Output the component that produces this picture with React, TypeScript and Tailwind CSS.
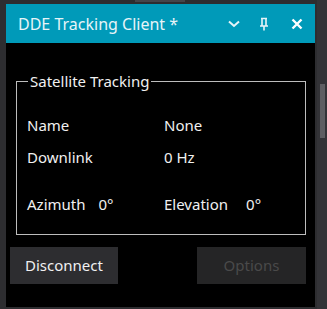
export default function App() {
  return (
    <div
      className="w-[327px] h-[309px] bg-[#2d2d30] flex overflow-hidden relative"
      style={{ fontFamily: '"Noto Sans", "Open Sans", sans-serif' }}
    >
      <div className="absolute left-[135px] top-0 w-[50px] h-[2px] bg-[#45454a]" />
      <div className="ml-[6px] mt-[4px] w-[309px] h-[303px] bg-black flex flex-col">
        <div className="h-[39px] bg-[#009ab9] flex items-center pl-[12px] pr-[12px] text-[#e6f4f8]">
          <span className="text-[16px] flex-1">DDE Tracking Client *</span>
          <svg width="12" height="8" viewBox="0 0 12 8" className="mr-[19px]">
            <path d="M1 1.5 L6 6 L11 1.5" stroke="#e6f4f8" strokeWidth="2" fill="none" />
          </svg>
          <svg width="10" height="14" viewBox="0 0 10 14" className="mr-[22px]">
            <path d="M1 9 H9 M3 1.5 V9 M7 1.5 V9 M2 1.5 H8 M5 9 V13.5" stroke="#e6f4f8" strokeWidth="1.6" fill="none" />
          </svg>
          <svg width="12" height="12" viewBox="0 0 12 12">
            <path d="M1.5 1.5 L10.5 10.5 M10.5 1.5 L1.5 10.5" stroke="#ffffff" strokeWidth="2.4" fill="none" />
          </svg>
        </div>
        <fieldset className="mt-[30px] ml-[10px] mr-[9px] h-[162px] border border-[#bdbdbd] px-[10px] text-[15px] leading-[20px] text-[#f0f0f0]">
          <legend className="ml-[1px] px-[2px] leading-[16px]">Satellite Tracking</legend>
          <div className="grid grid-cols-[137px_1fr] mt-[26px] gap-y-[12px]">
            <span>Name</span>
            <span>None</span>
            <span>Downlink</span>
            <span>0 Hz</span>
          </div>
          <div className="grid grid-cols-[137px_1fr] mt-[27px]">
            <span className="flex gap-[13px]">Azimuth<span>0°</span></span>
            <span className="flex gap-[18px]">Elevation<span>0°</span></span>
          </div>
        </fieldset>
        <div className="flex justify-between mt-[12px] ml-[4px] mr-[9px] text-[15px]">
          <button className="w-[108px] h-[37px] bg-[#2d2d30] text-[#f0f0f0]">Disconnect</button>
          <button className="w-[109px] h-[37px] bg-[#252526] text-[#4a4a4a]">Options</button>
        </div>
      </div>
      <div className="ml-[2px] w-[10px] h-full bg-[#333337] flex justify-center">
        <div className="mt-[84px] w-[5px] h-[54px] bg-[#5e5e62]" />
      </div>
    </div>
  );
}
